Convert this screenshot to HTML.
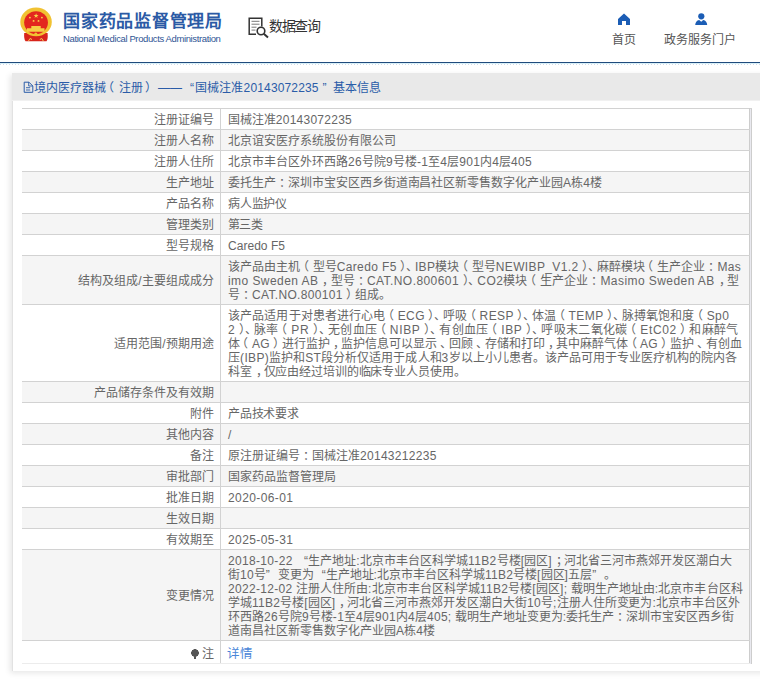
<!DOCTYPE html>
<html lang="zh-CN">
<head>
<meta charset="utf-8">
<style>
html,body{margin:0;padding:0;}
body{width:760px;height:679px;overflow:hidden;background:#fff;position:relative;font-family:"Liberation Sans",sans-serif;color:#555;}
.abs{position:absolute;white-space:nowrap;}
#logo{left:19px;top:6px;width:34px;height:37px;}
#t1{left:63px;top:10px;font-size:17px;font-weight:bold;color:#2b5aa5;line-height:24px;letter-spacing:0.75px;}
#t2{left:63px;top:32.6px;font-size:9.5px;color:#2f5595;line-height:12px;letter-spacing:-0.38px;}
#qicon{left:248px;top:17px;width:22px;height:22px;}
#qtext{left:269px;top:15.5px;font-size:14px;color:#333;line-height:20px;letter-spacing:-1.45px;}
#home{left:617px;top:13px;width:14px;height:12px;}
#homet{left:612px;top:30.5px;font-size:12px;color:#555;line-height:18px;}
#user{left:694px;top:13px;width:14px;height:13px;}
#usert{left:664px;top:30.5px;font-size:12px;color:#555;line-height:18px;}
#bline{left:0;top:62px;width:760px;height:1px;background:#1f4a7c;}
#bline2{left:0;top:63px;width:760px;height:1px;background:#d8f0f8;}
#dots{left:0;top:64px;width:760px;height:1px;background-image:repeating-linear-gradient(90deg,#d2dce8 0 1px,transparent 1px 3px);}
#panel{left:12px;top:73px;width:760px;height:598px;background:#fff;border-left:1px solid #e2e2e2;box-sizing:border-box;box-shadow:-2px 2px 6px rgba(0,0,0,.10);}
#phead{left:12px;top:73px;width:760px;height:28px;background:linear-gradient(#e9e9e9 0,#e9e9e9 27px,#f1f1f1 27px);}
#ptitle{left:22px;top:81px;font-size:12px;color:#2a5ca8;line-height:14px;height:14px;width:400px;}
#ptitle span{position:absolute;top:0;white-space:nowrap;}
table{position:absolute;left:22px;top:108px;border-collapse:collapse;width:728px;font-size:12px;color:#666;}
td{border-top:1px solid #d2d2d2;border-bottom:1px solid #d2d2d2;padding:4px 5px 2px 7px;line-height:14px;vertical-align:middle;white-space:nowrap;}
td.l{width:185px;text-align:right;border-right:1px solid #d2d2d2;padding-right:6px;}
td.v{border-right:1px solid #cdcdcd;}
tr:nth-child(even) td{background:#f5f5f5;}
tr.last td{height:16px;padding-top:5px;padding-bottom:1px;border-bottom-color:#ececec;}
.pin{display:inline-block;width:8px;height:10px;margin-right:3px;vertical-align:-1px;background:radial-gradient(circle at 4px 4px,#555 3.6px,transparent 4px);position:relative;}
.pin:after{content:"";position:absolute;left:3px;top:8px;width:2px;height:2px;background:#555;}
.ln{letter-spacing:var(--ls,0px)}
.en{letter-spacing:calc(var(--ls,0px) + 0.3px)}
.ql{display:inline-block;width:12px;text-align:right}
.qr{display:inline-block;width:12px;text-align:left}
.pl{position:relative;left:-3.5px}
.cm{position:relative;left:4px}
.dn{position:relative;left:3px}
.pr{position:relative;left:3.5px}
a{color:#4a86d8;text-decoration:none;font-size:12.5px;margin-left:-1px;}
</style>
</head>
<body>
<div id="panel" class="abs"></div>
<div id="phead" class="abs"></div>
<svg id="logo" class="abs" viewBox="0 0 34 37">
  <path d="M5.2 27 Q4.8 33 6.5 35.3 L27.5 35.3 Q29.2 33 28.6 27 Z" fill="#d8241b"/>
  <ellipse cx="17.05" cy="15.9" rx="15.75" ry="14.3" fill="#f1c232"/>
  <ellipse cx="17.05" cy="16.6" rx="11.9" ry="11.4" fill="#e3261e"/>
  <path d="M17.1 7.3l.62 1.75h1.85l-1.5 1.1.57 1.8-1.54-1.1-1.54 1.1.57-1.8-1.5-1.1h1.85z" fill="#f6d24a"/>
  <circle cx="10.9" cy="11.6" r=".95" fill="#f6d24a"/><circle cx="22.9" cy="11.6" r=".95" fill="#f6d24a"/>
  <circle cx="14.6" cy="14.9" r=".95" fill="#f6d24a"/><circle cx="19.5" cy="14.9" r=".95" fill="#f6d24a"/>
  <path d="M12.3 19.9h9.4v2.4h3.8v3.5H8v-3.5h4.3z" fill="#f5cf45"/>
  <circle cx="16.8" cy="28.2" r="1.6" fill="#f1c232"/>
  <path d="M9.5 35 L11 32.5 L13 33.5 M24.3 35 L22.8 32.5 L20.8 33.5" fill="none" stroke="#f3cf5a" stroke-width="1"/>
</svg>
<div id="t1" class="abs">国家药品监督管理局</div>
<div id="t2" class="abs">National Medical Products Administration</div>
<svg id="qicon" class="abs" viewBox="0 0 22 22">
  <path d="M13.8 9.5 V1.2 H1.2 V17.3 H8" fill="none" stroke="#333" stroke-width="1.5"/>
  <path d="M3.5 4.3h8M3.5 7.2h8M3.5 10.2h5M3.5 13.1h4" stroke="#777" stroke-width="1"/>
  <circle cx="13" cy="14" r="3.8" fill="none" stroke="#333" stroke-width="1.6"/>
  <path d="M15.8 16.8 L20 20.5" stroke="#333" stroke-width="2"/>
</svg>
<div id="qtext" class="abs">数据查询</div>
<svg id="home" class="abs" viewBox="0 0 14 12">
  <path d="M7 0.5 L13 6 V12 H9 V8 H5 V12 H1 V6 Z" fill="#1b5db5"/>
</svg>
<div id="homet" class="abs">首页</div>
<svg id="user" class="abs" viewBox="0 0 14 13">
  <circle cx="7.3" cy="3.3" r="3.1" fill="#1b5db5"/>
  <path d="M1.2 12 Q1.4 7.6 5.2 6.9 L7.2 8.7 L9.2 6.9 Q13 7.6 13.2 12 Z" fill="#1b5db5"/>
</svg>
<div id="usert" class="abs">政务服务门户</div>
<div class="abs" style="left:750px;top:108px;width:2px;height:556px;background:linear-gradient(90deg,#e9e9ef 1px,#cdcdcd 1px)"></div>
<div class="abs" style="left:750px;top:108px;width:2px;height:1px;background:#d2d2d2"></div>
<div id="bline" class="abs"></div>
<div id="bline2" class="abs"></div>
<div id="dots" class="abs"></div>
<div id="ptitle" class="abs">
<svg style="position:absolute;left:1px;top:0px" width="11" height="12" viewBox="0 0 11 12"><path d="M1.2 1.2h4.8L9.8 5v6.3H1.2z" fill="none" stroke="#2a5ca8" stroke-width="1"/><path d="M5.7 1.2v3.8h4" fill="none" stroke="#2a5ca8" stroke-width=".9"/><path d="M3 6.7h4.2M3 9h4.2" stroke="#2a5ca8" stroke-width=".9"/></svg>
<span style="left:12px">境内医疗器械</span>
<span style="left:80px">（</span>
<span style="left:97px">注册</span>
<span style="left:123px">）</span>
<span style="left:136px">——</span>
<span style="left:168px">“</span>
<span style="left:173px;letter-spacing:0.15px">国械注准20143072235</span>
<span style="left:300.5px">”</span>
<span style="left:311px">基本信息</span>
</div>
<table>
<tr><td class="l">注册证编号</td><td class="v"><span class="ln" style="--ls:-0.050px">国械注准<span class="en">20143072235</span></span></td></tr>
<tr><td class="l">注册人名称</td><td class="v"><span class="ln">北京谊安医疗系统股份有限公司</span></td></tr>
<tr><td class="l">注册人住所</td><td class="v"><span class="ln">北京市丰台区外环西路<span class="en">26</span>号院<span class="en">9</span>号楼<span class="en">-1</span>至<span class="en">4</span>层<span class="en">901</span>内<span class="en">4</span>层<span class="en">405</span></span></td></tr>
<tr><td class="l">生产地址</td><td class="v"><span class="ln" style="--ls:-0.032px">委托生产<span class="dn">：</span>深圳市宝安区西乡街道南昌社区新零售数字化产业园<span class="en">A</span>栋<span class="en">4</span>楼</span></td></tr>
<tr><td class="l">产品名称</td><td class="v"><span class="ln" style="--ls:-0.250px">病人监护仪</span></td></tr>
<tr><td class="l">管理类别</td><td class="v"><span class="ln" style="--ls:-0.600px">第三类</span></td></tr>
<tr><td class="l">型号规格</td><td class="v"><span class="ln" style="--ls:-0.262px"><span class="en">Caredo F5</span></span></td></tr>
<tr><td class="l">结构及组成<span class="en">/</span>主要组成成分</td><td class="v"><span class="ln" style="--ls:0.072px">该产品由主机<span class="pl">（</span>型号<span class="en">Caredo F5</span><span class="pr">）</span><span class="dn">、</span><span class="en">IBP</span>模块<span class="pl">（</span>型号<span class="en">NEWIBP_V1.2</span><span class="pr">）</span><span class="dn">、</span>麻醉模块<span class="pl">（</span>生产企业<span class="dn">：</span><span class="en">Mas</span></span><br><span class="ln" style="--ls:0.133px"><span class="en">imo Sweden AB</span><span class="cm">，</span>型号<span class="dn">：</span><span class="en">CAT.NO.800601</span><span class="pr">）</span><span class="dn">、</span><span class="en">CO2</span>模块<span class="pl">（</span>生产企业<span class="dn">：</span><span class="en">Masimo Sweden AB</span><span class="cm">，</span>型</span><br><span class="ln" style="--ls:0.022px">号<span class="dn">：</span><span class="en">CAT.NO.800101</span><span class="pr">）</span>组成。</span></td></tr>
<tr><td class="l">适用范围<span class="en">/</span>预期用途</td><td class="v"><span class="ln" style="--ls:0.120px">该产品适用于对患者进行心电<span class="pl">（</span><span class="en">ECG</span><span class="pr">）</span><span class="dn">、</span>呼吸<span class="pl">（</span><span class="en">RESP</span><span class="pr">）</span><span class="dn">、</span>体温<span class="pl">（</span><span class="en">TEMP</span><span class="pr">）</span><span class="dn">、</span>脉搏氧饱和度<span class="pl">（</span><span class="en">Sp0</span></span><br><span class="ln" style="--ls:0.369px"><span class="en">2</span><span class="pr">）</span><span class="dn">、</span>脉率<span class="pl">（</span><span class="en">PR</span><span class="pr">）</span><span class="dn">、</span>无创血压<span class="pl">（</span><span class="en">NIBP</span><span class="pr">）</span><span class="dn">、</span>有创血压<span class="pl">（</span><span class="en">IBP</span><span class="pr">）</span><span class="dn">、</span>呼吸末二氧化碳<span class="pl">（</span><span class="en">EtC02</span><span class="pr">）</span>和麻醉气</span><br><span class="ln" style="--ls:-0.058px">体<span class="pl">（</span><span class="en">AG</span><span class="pr">）</span>进行监护<span class="cm">，</span>监护信息可以显示<span class="dn">、</span>回顾<span class="dn">、</span>存储和打印<span class="cm">，</span>其中麻醉气体<span class="pl">（</span><span class="en">AG</span><span class="pr">）</span>监护<span class="dn">、</span>有创血</span><br><span class="ln" style="--ls:0.038px">压<span class="en">(IBP)</span>监护和<span class="en">ST</span>段分析仅适用于成人和<span class="en">3</span>岁以上小儿患者。该产品可用于专业医疗机构的院内各</span><br><span class="ln" style="--ls:-0.132px">科室<span class="cm">，</span>仅应由经过培训的临床专业人员使用。</span></td></tr>
<tr><td class="l">产品储存条件及有效期</td><td class="v"></td></tr>
<tr><td class="l">附件</td><td class="v"><span class="ln" style="--ls:-0.200px">产品技术要求</span></td></tr>
<tr><td class="l">其他内容</td><td class="v"><span class="ln"><span class="en">/</span></span></td></tr>
<tr><td class="l">备注</td><td class="v"><span class="ln" style="--ls:-0.005px">原注册证编号<span class="dn">：</span>国械注准<span class="en">20143212235</span></span></td></tr>
<tr><td class="l">审批部门</td><td class="v"><span class="ln" style="--ls:-0.012px">国家药品监督管理局</span></td></tr>
<tr><td class="l">批准日期</td><td class="v"><span class="ln" style="--ls:0.100px"><span class="en">2020-06-01</span></span></td></tr>
<tr><td class="l">生效日期</td><td class="v"></td></tr>
<tr><td class="l">有效期至</td><td class="v"><span class="ln" style="--ls:0.100px"><span class="en">2025-05-31</span></span></td></tr>
<tr><td class="l">变更情况</td><td class="v"><span class="ln" style="--ls:0.028px"><span class="en">2018-10-22</span> <span class="ql">“</span>生产地址<span class="en">:</span>北京市丰台区科学城<span class="en">11B2</span>号楼<span class="en">[</span>园区<span class="en">]</span><span class="cm">；</span>河北省三河市燕郊开发区潮白大</span><br><span class="ln" style="--ls:-0.033px">街<span class="en">10</span>号<span class="qr">”</span>变更为<span class="ql">“</span>生产地址<span class="en">:</span>北京市丰台区科学城<span class="en">11B2</span>号楼<span class="en">[</span>园区<span class="en">]</span>五层<span class="qr">”</span>。</span><br><span class="ln" style="--ls:0.017px"><span class="en">2022-12-02</span> 注册人住所由<span class="en">:</span>北京市丰台区科学城<span class="en">11B2</span>号楼<span class="en">[</span>园区<span class="en">];</span> 载明生产地址由<span class="en">:</span>北京市丰台区科</span><br><span class="ln" style="--ls:-0.021px">学城<span class="en">11B2</span>号楼<span class="en">[</span>园区<span class="en">]</span><span class="cm">，</span>河北省三河市燕郊开发区潮白大街<span class="en">10</span>号<span class="en">;</span>注册人住所变更为<span class="en">:</span>北京市丰台区外</span><br><span class="ln" style="--ls:-0.010px">环西路<span class="en">26</span>号院<span class="en">9</span>号楼<span class="en">-1</span>至<span class="en">4</span>层<span class="en">901</span>内<span class="en">4</span>层<span class="en">405;</span> 载明生产地址变更为<span class="en">:</span>委托生产<span class="dn">：</span>深圳市宝安区西乡街</span><br><span class="ln">道南昌社区新零售数字化产业园<span class="en">A</span>栋<span class="en">4</span>楼</span></td></tr>
<tr class="last"><td class="l"><span class="pin"></span>注</td><td class="v"><a>详情</a></td></tr>
</table>
</body>
</html>
